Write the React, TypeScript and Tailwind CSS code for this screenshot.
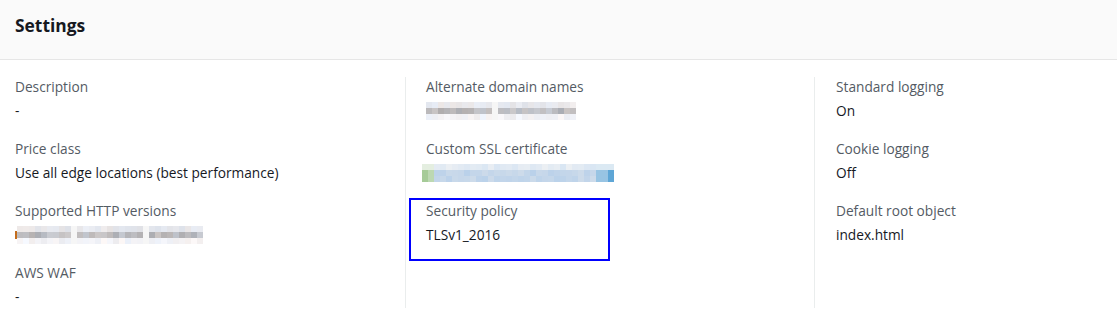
function rand(seed: number) {
  const x = Math.sin(seed * 12.9898) * 43758.5453;
  return x - Math.floor(x);
}

function grayCell(seed: number, row: number) {
  const base = row === 1 ? 188 : row === 0 ? 232 : 242;
  const spread = row === 1 ? 30 : 14;
  const v = base + Math.round((rand(seed) - 0.5) * spread);
  const tint = Math.round((rand(seed + 7) - 0.5) * 10);
  return `rgb(${v + tint}, ${v}, ${v - tint + 4})`;
}

function blueCell(seed: number, row: number, i: number, n: number) {
  if (i < 2) {
    return row === 0 ? "#e4eee0" : i === 0 ? "#a6cb98" : "#bcd8b2";
  }
  if (i >= n - 3) {
    return row === 0 ? "#dbe9f3" : i === n - 1 ? "#5ea6d6" : "#98c4e3";
  }
  const k = Math.round((rand(seed) - 0.5) * 20);
  if (row === 0) return `rgb(${226 + k}, ${234 + k / 2}, ${243})`;
  return `rgb(${196 + k}, ${214 + k / 2}, ${234})`;
}

function Mosaic({
  cells,
  seed,
  kind = "gray",
  gaps = [],
}: {
  cells: number;
  seed: number;
  kind?: "gray" | "blue";
  gaps?: number[];
}) {
  return (
    <div className="flex flex-col">
      {[0, 1, 2].map((r) => (
        <div key={r} className="flex">
          {Array.from({ length: cells }).map((_, i) => (
            <div
              key={i}
              className="w-[6px] h-[6px]"
              style={{
                background: gaps.includes(i)
                  ? "#f6f6f6"
                  : kind === "gray"
                    ? grayCell(seed + i * 3 + r * 101, r)
                    : blueCell(seed + i * 3 + r * 101, r, i, cells),
              }}
            />
          ))}
        </div>
      ))}
    </div>
  );
}

function Field({ label, children }: { label: string; children: React.ReactNode }) {
  return (
    <div className="flex flex-col gap-1">
      <div className="text-[13.7px] leading-5 text-[#545b64]">{label}</div>
      <div className="text-[13.7px] leading-5 text-[#16191f] h-5 flex items-center">{children}</div>
    </div>
  );
}

export default function App() {
  return (
    <div className="w-[1117px] h-[321px] bg-white overflow-hidden" style={{ fontFamily: '"Open Sans", "Noto Sans", sans-serif' }}>
      <div className="h-[60px] bg-[#fafafa] border-b border-[#e6e6e6] flex items-center px-[15px] pb-[8px]">
        <h2 className="text-[17.4px] font-bold text-[#16191f]">Settings</h2>
      </div>
      <div className="grid grid-cols-[405px_409px_1fr] pt-[17px]">
        <div className="pl-[15px] flex flex-col gap-[18px] pb-[1px]">
          <Field label="Description">-</Field>
          <Field label="Price class">Use all edge locations (best performance)</Field>
          <Field label="Supported HTTP versions">
            <div className="flex items-center">
              <div className="w-[2px] h-[8px] bg-[#c46d1c]" />
              <Mosaic cells={31} seed={3} gaps={[9, 21]} />
            </div>
          </Field>
          <Field label="AWS WAF">-</Field>
        </div>
        <div className="border-l border-[#eaeded] pl-[20px] flex flex-col gap-[18px] pb-[1px] relative">
          <Field label="Alternate domain names">
            <Mosaic cells={25} seed={17} gaps={[11]} />
          </Field>
          <Field label="Custom SSL certificate">
            <div className="-ml-[4px]">
              <Mosaic cells={32} seed={29} kind="blue" />
            </div>
          </Field>
          <Field label="Security policy">TLSv1_2016</Field>
          <div className="absolute left-[3px] top-[121px] w-[201px] h-[63px] border-2 border-[#0000ff]" />
        </div>
        <div className="border-l border-[#eaeded] pl-[21px] flex flex-col gap-[18px] pb-[1px]">
          <Field label="Standard logging">On</Field>
          <Field label="Cookie logging">Off</Field>
          <Field label="Default root object">index.html</Field>
        </div>
      </div>
    </div>
  );
}
